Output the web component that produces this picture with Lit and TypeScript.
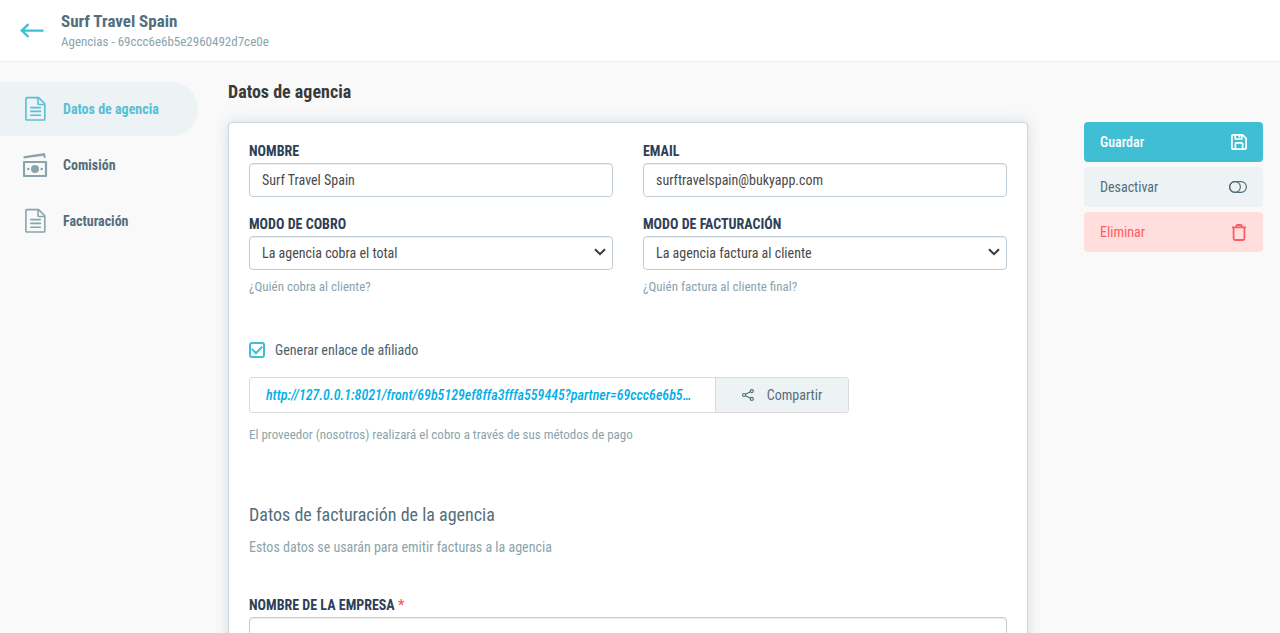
import { LitElement, html, css, svg } from "lit";
import { customElement, property, state } from "lit/decorators.js";
import { classMap } from "lit/directives/class-map.js";

type IconName = "back" | "doc" | "money" | "save" | "toggle" | "trash" | "share" | "chevron";

const icons: Record<IconName, { box: string; w: number; h: number; art: unknown }> = {
  back: {
    box: "0 0 24 16", w: 24, h: 16,
    art: svg`<path d="M23.5 7.6H2M8.5 1.2L1.8 7.6l6.7 6.4" fill="none" stroke="currentColor" stroke-width="2.4"/>`,
  },
  doc: {
    box: "0 0 22 26", w: 22, h: 26,
    art: svg`<g fill="none" stroke="currentColor" stroke-width="1.6" stroke-linejoin="round">
      <path d="M2 1.6h11.6l6.2 6.2v15.1a1.1 1.1 0 0 1-1.1 1.1H2a1.1 1.1 0 0 1-1.1-1.1V2.7A1.1 1.1 0 0 1 2 1.6z"/>
      <path d="M13 2v5.4a1.1 1.1 0 0 0 1.1 1.1h5.5"/>
      <path d="M5.8 11.6h9.6M5.8 15.4h9.6M5.8 19.2h9.6" stroke-linecap="round"/></g>`,
  },
  money: {
    box: "1 0 26 26", w: 26, h: 26,
    art: svg`<path d="M1.5 4.3L22.8.9l1 4.8h-2l-.5-1.9L1.5 6.4z" fill="currentColor"/>
      <rect x="2" y="10" width="22" height="14" fill="none" stroke="currentColor" stroke-width="2.2" stroke-linejoin="round"/>
      <circle cx="13" cy="17" r="4" fill="currentColor"/>
      <circle cx="6.3" cy="17" r="1.3" fill="currentColor"/><circle cx="19.7" cy="17" r="1.3" fill="currentColor"/>`,
  },
  save: {
    box: "0 0 16 16", w: 16, h: 16,
    art: svg`<g fill="none" stroke="currentColor" stroke-width="1.7" stroke-linejoin="round">
      <path d="M2 .9h9.6l3.5 3.5V14a1.1 1.1 0 0 1-1.1 1.1H2A1.1 1.1 0 0 1 .9 14V2A1.1 1.1 0 0 1 2 .9z"/>
      <path d="M4.2 1v4h6.6V1M4.4 15V9.8a1 1 0 0 1 1-1h5.2a1 1 0 0 1 1 1V15"/></g>
      <path d="M7.6 1.2h1.7v2.4H7.6z" fill="currentColor"/>`,
  },
  toggle: {
    box: "0 0 18 12", w: 18, h: 12,
    art: svg`<g fill="none" stroke="currentColor" stroke-width="1.2"><rect x=".6" y=".6" width="16.8" height="10.8" rx="5.4"/><circle cx="6" cy="6" r="5.4"/></g>`,
  },
  trash: {
    box: "0 0 16 17", w: 16, h: 17,
    art: svg`<g fill="none" stroke="currentColor" stroke-width="1.8" stroke-linejoin="round">
      <path d="M1 3.4h14M5.4 3.2V2a1 1 0 0 1 1-1h3.2a1 1 0 0 1 1 1v1.2"/>
      <path d="M2.6 3.4v11.1A1.5 1.5 0 0 0 4.1 16h7.8a1.5 1.5 0 0 0 1.5-1.5V3.4"/></g>`,
  },
  share: {
    box: "0 0 12 12", w: 12, h: 12,
    art: svg`<g fill="none" stroke="currentColor" stroke-width="1.2"><circle cx="2.1" cy="6" r="1.5"/><circle cx="9.8" cy="2.1" r="1.5"/><circle cx="9.8" cy="9.9" r="1.5"/><path d="M3.5 5.3l4.9-2.5M3.5 6.7l4.9 2.5"/></g>`,
  },
  chevron: {
    box: "0 0 12 8", w: 12, h: 8,
    art: svg`<path d="M1 1.2l5 5 5-5" fill="none" stroke="currentColor" stroke-width="2"/>`,
  },
};

const icon = (name: IconName) => {
  const i = icons[name];
  return html`<svg class="icon" aria-hidden="true" viewBox=${i.box} width=${i.w} height=${i.h}>${i.art}</svg>`;
};

const shared = css`
  * { box-sizing: border-box; }
  .icon { display: block; flex: none; }
  button, input, select { font: inherit; color: inherit; margin: 0; }
  h1, h2, p { margin: 0; }
`;

@customElement("side-nav")
export class SideNav extends LitElement {
  @state() private current = "Datos de agencia";

  private items: { label: string; icon: IconName }[] = [
    { label: "Datos de agencia", icon: "doc" },
    { label: "Comisión", icon: "money" },
    { label: "Facturación", icon: "doc" },
  ];

  static styles = [shared, css`
    :host { display: block; }
    .list { display: flex; flex-direction: column; gap: 2px; }
    .item {
      display: flex; align-items: center; height: 54px; padding-left: 23px; gap: 14px;
      border-radius: 0 27px 27px 0; color: #546e7a; font-weight: 700; text-decoration: none;
    }
    .glyph { width: 26px; display: flex; justify-content: center; color: #8aa4ab; }
    .active { background: #edf2f5; color: #56c1d5; }
    .active .glyph { color: #56c1d5; }
  `];

  render() {
    return html`<nav class="list">${this.items.map((it) => html`
      <a href="#" class=${classMap({ item: true, active: it.label === this.current })}
        @click=${(e: Event) => { e.preventDefault(); this.current = it.label; }}>
        <span class="glyph">${icon(it.icon)}</span><span>${it.label}</span></a>`)}</nav>`;
  }
}

@customElement("action-list")
export class ActionList extends LitElement {
  static styles = [shared, css`
    :host { display: flex; flex-direction: column; gap: 5px; }
    .action {
      display: flex; align-items: center; justify-content: space-between; height: 40px;
      padding: 0 16px; border: 0; border-radius: 4px; cursor: pointer;
    }
    .save { background: #40bfd4; color: #fff; font-weight: 500; }
    .off { background: #edf2f5; color: #546e7a; }
    .remove { background: #ffdedd; color: #ff5b5e; }
  `];

  render() {
    return html`
      <button class="action save">Guardar ${icon("save")}</button>
      <button class="action off">Desactivar ${icon("toggle")}</button>
      <button class="action remove">Eliminar ${icon("trash")}</button>`;
  }
}

@customElement("form-field")
export class FormField extends LitElement {
  @property() label = "";
  @property() value = "";
  @property() type = "text";
  @property() hint = "";
  @property({ type: Boolean }) required = false;
  @property({ attribute: false }) options: string[] = [];

  static styles = [shared, css`
    :host { display: block; }
    .label { display: block; line-height: 24px; font-weight: 700; color: #2e4057; text-transform: uppercase; }
    .star { color: #ff5b5e; }
    .wrap { position: relative; }
    .control {
      display: block; width: 100%; height: 34px; padding: 0 12px; border: 1px solid #c0ccd6;
      border-radius: 4px; background: #fff; color: #4a4a4a; appearance: none; outline: none;
      box-shadow: inset 0 1px 1px rgba(0, 0, 0, 0.07);
    }
    .control:focus { border-color: #40bfd4; }
    .arrow { position: absolute; right: 7px; top: 12px; color: #3a3a3a; pointer-events: none; }
    .hint { margin-top: 7px; font-size: 13px; line-height: 20px; color: #8aa4ab; }
  `];

  render() {
    return html`
      <label class="label" for="control">${this.label}${this.required ? html` <span class="star">*</span>` : ""}</label>
      <div class="wrap">${this.options.length
        ? html`<select class="control" id="control">${this.options.map((o) => html`<option>${o}</option>`)}</select>
            <span class="arrow">${icon("chevron")}</span>`
        : html`<input class="control" id="control" type=${this.type} .value=${this.value} ?required=${this.required} />`}</div>
      ${this.hint ? html`<p class="hint">${this.hint}</p>` : ""}`;
  }
}

@customElement("app-root")
export class AppRoot extends LitElement {
  static styles = [shared, css`
    :host {
      display: flex; flex-direction: column; height: 100vh; background: #f9f9f9; color: #546e7a;
      font: 14px/20px "Roboto Condensed", "Liberation Sans Narrow", "Arial Narrow", Roboto, sans-serif;
    }
    .header {
      flex: none; display: flex; align-items: center; gap: 17px; height: 62px; padding: 0 20px;
      background: #fff; border-bottom: 1px solid #eeeeee;
    }
    .back { color: #40bfd4; }
    .title { font-size: 17px; line-height: 22px; font-weight: 700; }
    .subtitle { font-size: 13px; line-height: 20px; color: #8aa4ab; }
    .layout {
      flex: 1; min-height: 0; overflow: auto; scrollbar-width: none;
      display: grid; grid-template-columns: 198px minmax(0, 1fr) 179px; align-items: start;
      padding-right: 17px;
    }
    .nav { padding-top: 20px; }
    .main { padding: 18px 56px 40px 30px; }
    .actions { margin-top: 60px; }
    .heading { font-size: 18px; line-height: 24px; font-weight: 700; color: #3a3a3a; margin-bottom: 18px; }
    .card {
      padding: 16px 20px 40px; background: #fff; border: 1px solid #cbd6e2; border-radius: 4px;
      box-shadow: 0 0 14px rgba(84, 110, 122, 0.2);
    }
    .grid { display: grid; grid-template-columns: 1fr 1fr; gap: 15px 30px; }
    .check { display: flex; align-items: center; gap: 10px; margin: 43px 0 17px; color: #4a626d; }
    .tick {
      appearance: none; width: 16px; height: 16px; border: 2px solid #40bfd4; border-radius: 3px;
      background: #fff; display: grid; place-items: center;
    }
    .tick:checked::before {
      content: ""; width: 8px; height: 5px; border: solid #40bfd4; border-width: 0 0 2px 2px;
      transform: rotate(-45deg); margin-bottom: 3px;
    }
    .share { display: flex; max-width: 600px; height: 36px; border: 1px solid #dadada; border-radius: 3px; overflow: hidden; }
    .url {
      flex: 1; min-width: 0; padding-left: 16px; line-height: 34px; font-style: italic; font-weight: 500; color: #00aee6;
      text-decoration: none; white-space: nowrap;
    }
    .copy {
      flex: none; width: 133px; display: flex; align-items: center; justify-content: center; gap: 13px;
      border: 0; border-left: 1px solid #dadada; background: #edf2f5; cursor: pointer; padding: 0;
    }
    .note { margin-top: 12px; font-size: 13px; color: #8aa4ab; }
    .section { margin-top: 58px; font-size: 18px; line-height: 24px; font-weight: 400; }
    .lead { margin: 10px 0 36px; color: #8aa4ab; }
  `];

  render() {
    return html`
      <header class="header">
        <a class="back" href="#" aria-label="Agencias">${icon("back")}</a>
        <div>
          <h1 class="title">Surf Travel Spain</h1>
          <p class="subtitle">Agencias - 69ccc6e6b5e2960492d7ce0e</p>
        </div>
      </header>
      <div class="layout">
        <side-nav class="nav"></side-nav>
        <main class="main">
          <h2 class="heading">Datos de agencia</h2>
          <div class="card">
            <div class="grid">
              <form-field label="Nombre" value="Surf Travel Spain"></form-field>
              <form-field label="Email" type="email" value="surftravelspain@bukyapp.com"></form-field>
              <form-field label="Modo de cobro" hint="¿Quién cobra al cliente?" .options=${["La agencia cobra el total"]}></form-field>
              <form-field label="Modo de facturación" hint="¿Quién factura al cliente final?" .options=${["La agencia factura al cliente"]}></form-field>
            </div>
            <label class="check"><input class="tick" type="checkbox" checked /><span>Generar enlace de afiliado</span></label>
            <div class="share">
              <a class="url" href="#">http://127.0.0.1:8021/front/69b5129ef8ffa3fffa559445?partner=69ccc6e6b5…</a>
              <button class="copy">${icon("share")}<span>Compartir</span></button>
            </div>
            <p class="note">El proveedor (nosotros) realizará el cobro a través de sus métodos de pago</p>
            <h2 class="section">Datos de facturación de la agencia</h2>
            <p class="lead">Estos datos se usarán para emitir facturas a la agencia</p>
            <form-field label="Nombre de la empresa" required></form-field>
          </div>
        </main>
        <action-list class="actions"></action-list>
      </div>`;
  }
}
